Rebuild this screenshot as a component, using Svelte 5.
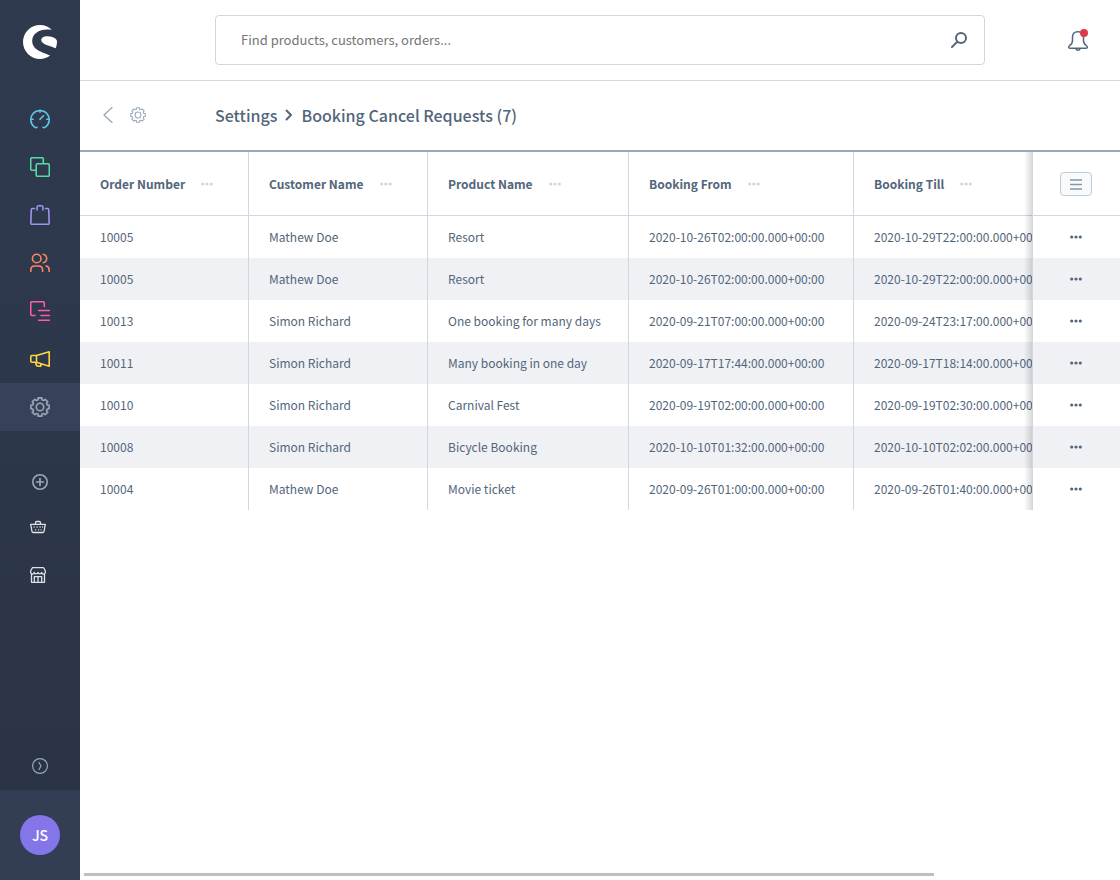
<script>
  const nav = [
    { id: 'dashboard', label: 'Dashboard', color: '#5bc8e6' },
    { id: 'catalogues', label: 'Catalogues', color: '#57d9a3' },
    { id: 'orders', label: 'Orders', color: '#a092f0' },
    { id: 'customers', label: 'Customers', color: '#f88962' },
    { id: 'content', label: 'Content', color: '#ff5bab' },
    { id: 'marketing', label: 'Marketing', color: '#ffd53d' },
    { id: 'settings', label: 'Settings', color: '#9aa8b5', active: true },
  ];
  const columns = ['Order Number', 'Customer Name', 'Product Name', 'Booking From', 'Booking Till'];
  const rows = [
    ['10005', 'Mathew Doe', 'Resort', '2020-10-26T02:00:00.000+00:00', '2020-10-29T22:00:00.000+00:00'],
    ['10005', 'Mathew Doe', 'Resort', '2020-10-26T02:00:00.000+00:00', '2020-10-29T22:00:00.000+00:00'],
    ['10013', 'Simon Richard', 'One booking for many days', '2020-09-21T07:00:00.000+00:00', '2020-09-24T23:17:00.000+00:00'],
    ['10011', 'Simon Richard', 'Many booking in one day', '2020-09-17T17:44:00.000+00:00', '2020-09-17T18:14:00.000+00:00'],
    ['10010', 'Simon Richard', 'Carnival Fest', '2020-09-19T02:00:00.000+00:00', '2020-09-19T02:30:00.000+00:00'],
    ['10008', 'Simon Richard', 'Bicycle Booking', '2020-10-10T01:32:00.000+00:00', '2020-10-10T02:02:00.000+00:00'],
    ['10004', 'Mathew Doe', 'Movie ticket', '2020-09-26T01:00:00.000+00:00', '2020-09-26T01:40:00.000+00:00'],
  ];

  // Outline of an eight-toothed gear in a 20 unit box.
  const teeth = 8;
  const point = (r, a) => `${(10 + r * Math.cos(a)).toFixed(2)} ${(10 + r * Math.sin(a)).toFixed(2)}`;
  const gear =
    'M' +
    Array.from({ length: teeth }, (_, i) => {
      const a = (i * 2 * Math.PI) / teeth;
      return [point(7.5, a - 0.26), point(9.3, a - 0.2), point(9.3, a + 0.2), point(7.5, a + 0.26)].join('L');
    }).join('L') +
    'Z';
</script>

{#snippet dots()}
  <svg class="dots" viewBox="0 0 12 4" aria-hidden="true">
    <circle cx="1.7" cy="2" r="1.6" /><circle cx="6" cy="2" r="1.6" /><circle cx="10.3" cy="2" r="1.6" />
  </svg>
{/snippet}

<div class="app">
  <aside class="sidebar">
    <a class="logo" href="#home" aria-label="Home">
      <svg viewBox="0 0 34 34" width="34" height="34">
        <path d="M28.800 4.800C25.700 1.800 21.600 0 17 0a17 17 0 0 0 0 34c3.800 0 7.300-1.200 10.200-3.400C20.500 27 9.200 25.800 9.200 15.700 9.200 8.200 17.500 3 28.800 4.800z" />
        <path d="M18.200 15c0-2.500 3-4 6.800-3.800 4.800.3 8.600 2.400 8.900 4.600.3 2.600-.2 5-1.200 7.400C27.500 21 18.200 19.300 18.200 15z" />
      </svg>
    </a>

    <nav aria-label="Main">
      {#each nav as item}
        <a class="nav-item" class:active={item.active} href={'#' + item.id} aria-label={item.label} style:color={item.color}>
          <svg class="icon" viewBox="0 0 20 20" aria-hidden="true">
            {#if item.id === 'dashboard'}
              <path d="M7 18.300c-.6.600-1.500.4-2.400-.2a9.200 9.200 0 1 1 10.800 0c-.9.600-1.800.800-2.400.2M10 1v2.200M1 10.300h2.200M16.800 10.300H19M10 10.300 13.500 6.800" />
            {:else if item.id === 'catalogues'}
              <path d="M6 13.300H2a1.300 1.300 0 0 1-1.300-1.300V2A1.300 1.300 0 0 1 2 .7h10A1.300 1.300 0 0 1 13.300 2v4" />
              <rect x="6.200" y="6.700" width="13.100" height="12.600" rx="1.300" />
            {:else if item.id === 'orders'}
              <path d="M4.500 3.500H2.600c-.8 0-1.300.5-1.300 1.200L.8 18c0 .8.500 1.300 1.300 1.300h15.800c.8 0 1.300-.5 1.300-1.300l-.5-13.300c0-.7-.5-1.200-1.300-1.200h-1.900M7 5V2.800C7 1.500 7.900.7 9 .7h2c1.100 0 2 .8 2 2.100V5" />
            {:else if item.id === 'customers'}
              <circle cx="6.700" cy="5.500" r="4.300" />
              <path d="M.8 18.500V17c0-2.400 1.500-4 4-4h3.800c2.500 0 4 1.600 4 4v1.500M13.300 1.300a4.300 4.300 0 0 1 0 8.400M16 13c2 .3 3.200 1.800 3.200 4v1.500" />
            {:else if item.id === 'content'}
              <path d="M5 14.500H2.300c-.9 0-1.600-.7-1.600-1.600V2.300C.7 1.400 1.400.7 2.300.7h10.400c.9 0 1.600.7 1.600 1.600v3.200M8.700 9.500h10.600M11 14.500h8.300M8.700 19.300h10.600" />
            {:else if item.id === 'marketing'}
              <path d="M6.500 6.500 19.200 2.800v14.400L6.500 13.300zM6.500 6.500H1.800a1 1 0 0 0-1 1v4.800a1 1 0 0 0 1 1h4.700M5.800 13.500l.2 1.700a2.300 2.300 0 0 0 2.300 2h2.500v-2.500" />
            {:else}
              <path d={gear} /><circle cx="10" cy="10" r="3.700" />
            {/if}
          </svg>
        </a>
      {/each}
    </nav>

    <div class="extras">
      <button class="extra add" aria-label="Add">
        <svg viewBox="0 0 16 16" width="16" height="16"><circle cx="8" cy="8" r="7.200" /><path d="M8 4.500v7M4.500 8h7" stroke-width="1.700" /></svg>
      </button>
      <a class="extra" href="#shop" aria-label="Storefront basket">
        <svg viewBox="0 0 16 16" width="16" height="16">
          <path d="M.7 5.300h14.600l-1.300 7.200c-.1.700-.5 1-1.200 1H3.200c-.7 0-1.100-.3-1.200-1zM5.500 5.200V3.700c0-.7.400-1.200 1.200-1.200h2.600c.8 0 1.200.5 1.200 1.200v1.500" />
          <path d="M4 8h.2M7 8h.2M10 8h.2M12.500 8h.1M5.500 10.800h.2M8.500 10.800h.2M11 10.800h.1" />
        </svg>
      </a>
      <a class="extra" href="#store" aria-label="Store">
        <svg viewBox="0 0 16 16" width="16" height="16">
          <path d="M2.400.7h11.200l1.700 3v1.400a1.800 1.800 0 0 1-3.600.3 1.900 1.900 0 0 1-3.700 0 1.900 1.900 0 0 1-3.700 0 1.800 1.800 0 0 1-3.600-.3V3.700zM1.500 7v8.300h13V7M4.300 15V9.700h7.400V15M8 9.700V15" />
        </svg>
      </a>
    </div>

    <button class="expand" aria-label="Expand menu">
      <svg viewBox="0 0 16 16" width="16" height="16"><circle cx="8" cy="8" r="7.400" /><path d="m7 4.500 2 3.500-2 3.500" /></svg>
    </button>
    <div class="user"><button class="avatar">JS</button></div>
  </aside>

  <main>
    <header class="topbar">
      <form class="search" role="search">
        <input type="search" aria-label="Search" placeholder="Find products, customers, orders..." />
        <button type="submit" aria-label="Search">
          <svg viewBox="0 0 16 16" width="16" height="16"><circle cx="10" cy="6" r="5" /><path d="M6.300 9.700.9 15.100" /></svg>
        </button>
      </form>
      <button class="bell" aria-label="Notifications">
        <svg viewBox="0 0 22 22" width="22" height="22">
          <path d="M2.800 19.200h16.400c1.400 0 1.500-1.500.5-2.200-2-1.400-3.200-3-3.200-5.200V8c0-3.300-2.200-5.300-5-5.300h-1C7.700 2.700 5.500 4.700 5.500 8v3.800c0 2.200-1.200 3.800-3.200 5.200-1 .7-.9 2.200.5 2.200zM8.800 19.500c.4 1.200 1.200 1.700 2.200 1.700s1.800-.5 2.200-1.700" />
        </svg>
        <span class="badge"></span>
      </button>
    </header>

    <div class="pagebar">
      <div class="page-tools">
        <a href="#back" aria-label="Back"><svg viewBox="0 0 10 16" width="10" height="16"><path d="M9 .5 1 8l8 7.500" /></svg></a>
        <a href="#settings" aria-label="Settings"><svg viewBox="0 0 20 20" width="16" height="16"><path d={gear} /><circle cx="10" cy="10" r="3.700" /></svg></a>
      </div>
      <h1>
        <span>Settings</span>
        <svg viewBox="0 0 8 12" width="8" height="12" aria-hidden="true"><path d="m1.500 1.500 4.500 4.500-4.500 4.500" /></svg>
        <span>Booking Cancel Requests (7)</span>
      </h1>
    </div>

    <div class="grid">
      <table>
        <colgroup><col class="c1" /><col class="c2" /><col class="c3" /><col class="c4" /><col class="c5" /><col class="c6" /></colgroup>
        <thead>
          <tr>
            {#each columns as column}
              <th scope="col"><div class="head"><span>{column}</span><button aria-label={column + ' options'}>{@render dots()}</button></div></th>
            {/each}
            <th class="actions">
              <button class="list-settings" aria-label="List settings">
                <svg viewBox="0 0 12 12" width="12" height="12"><path d="M0 2h12M0 6.500h12M0 11h12" /></svg>
              </button>
            </th>
          </tr>
        </thead>
        <tbody>
          {#each rows as row}
            <tr>
              {#each row as cell}<td>{cell}</td>{/each}
              <td class="actions"><button class="row-menu" aria-label="Row actions">{@render dots()}</button></td>
            </tr>
          {/each}
        </tbody>
      </table>
    </div>
    <div class="scrollbar"><div class="thumb"></div></div>
  </main>
</div>

<style>
  :global(body) { margin: 0; background: #fff; }
  .app {
    display: flex;
    min-height: 100vh;
    color: #52667a;
    font-family: 'Source Sans Pro', 'Noto Sans CJK SC', sans-serif;
    font-size: 12px;
    line-height: 20px;
  }
  .app *, .app { box-sizing: border-box; }
  svg { display: block; fill: none; stroke: currentColor; stroke-linecap: round; stroke-linejoin: round; }
  button { padding: 0; border: 0; background: none; color: inherit; font: inherit; cursor: pointer; }
  a { color: inherit; }

  .sidebar {
    display: flex;
    flex-direction: column;
    flex: none;
    width: 80px;
    background: linear-gradient(#303a4f, #2a3345);
  }
  .logo { display: flex; justify-content: center; padding: 25px 0 36px; }
  .logo svg { fill: #fff; stroke: none; }
  .nav-item { display: grid; place-items: center; height: 48px; }
  .nav-item.active { background: #37415a; }
  .icon { width: 20px; height: 20px; stroke-width: 1.6; }
  .extras { display: flex; flex-direction: column; padding-top: 30px; color: #dfe3e8; }
  .extra { display: flex; align-items: center; height: 48px; padding-left: 30px; stroke-width: 1.3; }
  .extra.add { height: 42px; padding-left: 32px; color: #98a9b8; stroke-width: 1.6; }
  .expand { display: grid; place-items: center; height: 48px; margin-top: auto; color: #98a9b8; stroke-width: 1.2; }
  .user { display: grid; place-items: center; height: 90px; background: #333d54; }
  .avatar {
    width: 40px;
    height: 40px;
    border-radius: 50%;
    background: #8475e8;
    color: #fff;
    font-size: 14px;
    font-weight: 500;
  }

  main { display: flex; flex: 1; flex-direction: column; min-width: 0; }
  .topbar {
    display: grid;
    grid-template-columns: 1fr 135px;
    align-items: center;
    height: 81px;
    padding-left: 135px;
    border-bottom: 1px solid #cfd8e1;
  }
  .search { display: flex; height: 50px; border: 1px solid #cfd8e1; border-radius: 4px; }
  .search input {
    flex: 1;
    min-width: 0;
    padding: 0 25px;
    border: 0;
    outline: 0;
    background: none;
    color: #52667a;
    font: inherit;
    font-size: 13px;
  }
  .search input::placeholder { color: #757575; opacity: 1; }
  .search button { display: grid; place-items: center; width: 50px; stroke-width: 2; }
  .bell { position: relative; justify-self: center; margin-left: 51px; stroke-width: 1.5; }
  .badge {
    position: absolute;
    top: 0;
    right: 1px;
    width: 8px;
    height: 8px;
    border-radius: 50%;
    background: #de394a;
  }

  .pagebar {
    display: grid;
    grid-template-columns: 135px 1fr;
    align-items: center;
    height: 71px;
    padding-bottom: 2px;
    border-bottom: 2px solid #98a9b8;
  }
  .page-tools { display: flex; gap: 17px; padding-left: 23px; color: #98a9b8; stroke-width: 1.3; }
  h1 { display: flex; align-items: center; gap: 8px; margin: 0; font-size: 16px; font-weight: 500; white-space: nowrap; }
  h1 svg { stroke-width: 2; }

  .grid { flex: 1; overflow-x: auto; scrollbar-width: none; }
  table { width: 1262px; min-width: 100%; border-spacing: 0; table-layout: fixed; text-align: left; white-space: nowrap; }
  .c1 { width: 169px; }
  .c2 { width: 179px; }
  .c3 { width: 201px; }
  .c4 { width: 225px; }
  .c6 { width: 88px; }
  th, td { height: 42px; padding: 0 20px; border-right: 1px solid #cfd8e1; background: #fff; }
  th { height: 64px; border-bottom: 1px solid #cfd8e1; font-weight: 700; }
  tbody tr:nth-child(even) td { background: #f0f1f5; }
  .head { display: flex; align-items: center; gap: 16px; }
  .dots { width: 12px; height: 4px; fill: currentColor; stroke: none; }
  .head button { color: #cfd8e1; }
  .actions {
    position: sticky;
    right: 0;
    padding: 0 1px 0 0;
    border-right: 0;
    border-left: 1px solid #cfd8e1;
  }
  .actions::before {
    content: '';
    position: absolute;
    top: 0;
    bottom: 0;
    left: -9px;
    width: 8px;
    background: linear-gradient(to right, transparent, rgb(0 0 0 / 14%));
  }
  th.actions::before { bottom: -1px; }
  .list-settings {
    display: grid;
    place-items: center;
    width: 32px;
    height: 24px;
    margin: 0 auto;
    border: 1px solid #bccad6;
    border-radius: 4px;
    background: #f9fafb;
    color: #8298ab;
    stroke-width: 1.5;
  }
  .row-menu { display: block; margin: 0 auto; }
  .scrollbar { padding: 0 4px 4px; }
  .thumb { width: 82.4%; height: 3px; background: #bfbfbf; }
</style>
